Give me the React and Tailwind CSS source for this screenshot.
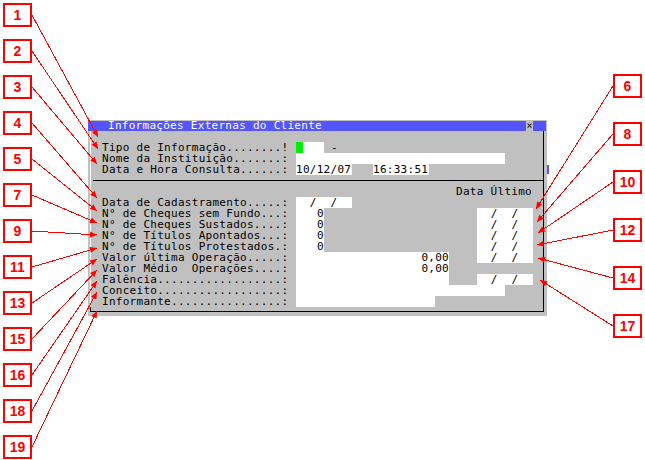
import React from "react";

// annotation numbers down each side of the screenshot
const leftBoxes = ["1", "2", "3", "4", "5", "7", "9", "11", "13", "15", "16", "18", "19"];
const rightBoxes = ["6", "8", "10", "12", "14", "17"];

// leader lines: [x1, y1, x2(tip), y2(tip)]
const leaders = [
  [32, 15, 98, 137],
  [32, 51, 98, 149],
  [32, 87, 97, 164],
  [32, 123, 97, 198],
  [32, 159, 97, 211],
  [32, 195, 97, 223],
  [32, 231, 97, 235],
  [32, 267, 97, 248],
  [32, 303, 97, 259],
  [32, 339, 97, 270],
  [32, 375, 97, 281],
  [32, 411, 97, 292],
  [32, 447, 97, 311],
  [613, 86, 536, 209],
  [613, 134, 537, 222],
  [613, 182, 538, 233],
  [613, 230, 537, 245],
  [613, 278, 538, 258],
  [613, 326, 540, 280],
];

const arrowHead = ([x1, y1, x2, y2]) => {
  const dx = x2 - x1;
  const dy = y2 - y1;
  const len = Math.hypot(dx, dy);
  const ux = dx / len;
  const uy = dy / len;
  const bx = x2 - ux * 7;
  const by = y2 - uy * 7;
  return `${x2},${y2} ${bx - uy * 3},${by + ux * 3} ${bx + uy * 3},${by - ux * 3}`;
};

const NumBox = ({ n }) => (
  <div className="flex h-[24px] w-[29px] items-center justify-center border-2 border-[#ff0000] bg-white font-['Liberation_Sans',Arial,sans-serif] text-[14px] font-bold leading-none text-[#ff0000]">
    {n}
  </div>
);

const Row = ({ label, children }) => (
  <div className="flex h-[11px] pl-[11px]">
    <span className="w-[194px] shrink-0 whitespace-pre">{label}</span>
    {children}
  </div>
);

const Field = ({ className = "", children }) => (
  <span className={`block h-[11px] shrink-0 whitespace-pre bg-white ${className}`}>{children}</span>
);

const dates = "  /  /  ";

export default function App() {
  return (
    <div className="relative h-[460px] w-[645px] overflow-hidden bg-white">
      {/* left numbers */}
      <div className="absolute left-[3px] top-[3px] flex flex-col gap-[12px]">
        {leftBoxes.map((n) => (
          <NumBox key={n} n={n} />
        ))}
      </div>

      {/* right numbers */}
      <div className="absolute left-[613px] top-[74px] flex flex-col gap-[24px]">
        {rightBoxes.map((n) => (
          <NumBox key={n} n={n} />
        ))}
      </div>

      {/* bit of the window behind */}
      <div className="absolute left-[547px] top-[165px] h-[9px] w-[2px] bg-[#5555ff]" />

      {/* terminal window */}
      <div className="absolute left-[88px] top-[120px] w-[459px] bg-[#c0c0c0] pb-[4px] pt-px font-['DejaVu_Sans_Mono',monospace] text-[11px] leading-[11px] tracking-[0.28px] text-black">
        <div className="mr-px flex h-[10px] items-center bg-[#5555ff] pl-[20px] leading-[10px] text-white">
          <span className="whitespace-pre">Informações Externas do Cliente</span>
          <span className="ml-auto mr-[13px] flex h-[10px] w-[7px] items-center justify-center bg-[#c0c0c0] text-[10px] tracking-normal text-black">
            ×
          </span>
        </div>

        <div className="ml-[2px] w-[454px] border-b border-r border-black">
          <div className="border-l border-white">
            <div className="h-[11px]" />
            <Row label="Tipo de Informação........!">
              <Field className="flex w-[28px]">
                <span className="h-[11px] w-[7px] bg-[#00ee00]" />
              </Field>
              <span className="whitespace-pre"> -</span>
            </Row>
            <Row label="Nome da Instituição.......:">
              <Field className="w-[209px]" />
            </Row>
            <Row label="Data e Hora Consulta......:">
              <Field className="w-[56px]">10/12/07</Field>
              <Field className="ml-[21px] w-[56px]">16:33:51</Field>
            </Row>
            <div className="flex h-[11px] items-center pl-[2px]">
              <div className="h-px w-full bg-black" />
            </div>
            <div className="flex h-[11px] justify-end pr-[11px]">
              <span className="whitespace-pre">Data Último</span>
            </div>
            <Row label="Data de Cadastramento.....:">
              <Field className="w-[56px]">{dates}</Field>
            </Row>
            <Row label="N° de Cheques sem Fundo...:">
              <Field className="w-[28px] text-right">0</Field>
              <Field className="ml-[153px] w-[56px]">{dates}</Field>
            </Row>
            <Row label="N° de Cheques Sustados....:">
              <Field className="w-[28px] text-right">0</Field>
              <Field className="ml-[153px] w-[56px]">{dates}</Field>
            </Row>
            <Row label="N° de Títulos Apontados...:">
              <Field className="w-[28px] text-right">0</Field>
              <Field className="ml-[153px] w-[56px]">{dates}</Field>
            </Row>
            <Row label="N° de Títulos Protestados.:">
              <Field className="w-[28px] text-right">0</Field>
              <Field className="ml-[153px] w-[56px]">{dates}</Field>
            </Row>
            <Row label="Valor última Operação.....:">
              <Field className="w-[153px] text-right">0,00</Field>
              <Field className="ml-[28px] w-[56px]">{dates}</Field>
            </Row>
            <Row label="Valor Médio  Operações....:">
              <Field className="w-[153px] text-right">0,00</Field>
            </Row>
            <Row label="Falência..................:">
              <Field className="w-[153px]" />
              <Field className="ml-[28px] w-[56px]">{dates}</Field>
            </Row>
            <Row label="Conceito..................:">
              <Field className="w-[209px]" />
            </Row>
            <Row label="Informante................:">
              <Field className="w-[139px]" />
            </Row>
          </div>
          <div className="h-[4px] border-l border-black" />
        </div>
      </div>

      {/* leader lines with arrow heads */}
      <svg className="pointer-events-none absolute left-0 top-0" width="645" height="460" viewBox="0 0 645 460">
        {leaders.map((l, i) => (
          <g key={i}>
            <line x1={l[0]} y1={l[1]} x2={l[2]} y2={l[3]} stroke="#ff0000" strokeWidth="1" shapeRendering="crispEdges" />
            <polygon points={arrowHead(l)} fill="#ff0000" />
          </g>
        ))}
      </svg>
    </div>
  );
}
